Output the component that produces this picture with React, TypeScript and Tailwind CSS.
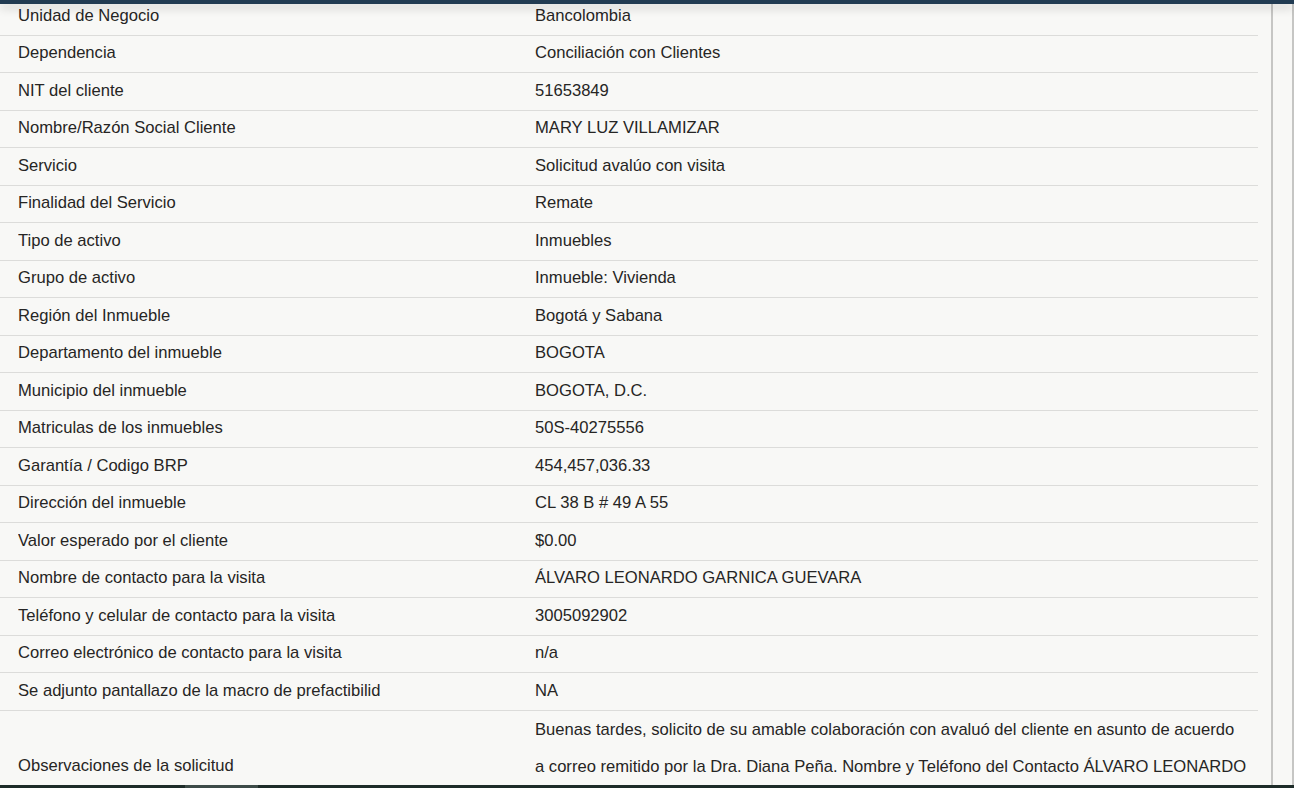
const rows: [string, string][] = [
  ["Unidad de Negocio", "Bancolombia"],
  ["Dependencia", "Conciliación con Clientes"],
  ["NIT del cliente", "51653849"],
  ["Nombre/Razón Social Cliente", "MARY LUZ VILLAMIZAR"],
  ["Servicio", "Solicitud avalúo con visita"],
  ["Finalidad del Servicio", "Remate"],
  ["Tipo de activo", "Inmuebles"],
  ["Grupo de activo", "Inmueble: Vivienda"],
  ["Región del Inmueble", "Bogotá y Sabana"],
  ["Departamento del inmueble", "BOGOTA"],
  ["Municipio del inmueble", "BOGOTA, D.C."],
  ["Matriculas de los inmuebles", "50S-40275556"],
  ["Garantía / Codigo BRP", "454,457,036.33"],
  ["Dirección del inmueble", "CL 38 B # 49 A 55"],
  ["Valor esperado por el cliente", "$0.00"],
  ["Nombre de contacto para la visita", "ÁLVARO LEONARDO GARNICA GUEVARA"],
  ["Teléfono y celular de contacto para la visita", "3005092902"],
  ["Correo electrónico de contacto para la visita", "n/a"],
  ["Se adjunto pantallazo de la macro de prefactibilid", "NA"],
];

export default function App() {
  return (
    <div
      className="relative flex h-screen flex-col overflow-hidden bg-[#f8f8f6] text-[16.6px] text-[#262524]"
      style={{ fontFamily: '"Liberation Sans", Arial, sans-serif' }}
    >
      {/* top nav edge + shadow */}
      <div className="absolute inset-x-0 top-0 z-10 h-[4px] bg-[#213b52] shadow-[0_4px_10px_rgba(0,0,0,0.2)]" />

      <div className="flex min-h-0 flex-1">
        <div className="-mt-[2px] w-[1258px] shrink-0">
          {rows.map(([label, value]) => (
            <div
              key={label}
              className="grid h-[37.5px] grid-cols-[517px_1fr] items-center border-b border-[#dcdcda] pl-[18px]"
            >
              <span className="truncate">{label}</span>
              <span>{value}</span>
            </div>
          ))}
          <div className="grid grid-cols-[517px_1fr] items-center pl-[18px]">
            <span>Observaciones de la solicitud</span>
            <p className="whitespace-nowrap leading-[37.5px]">
              Buenas tardes, solicito de su amable colaboración con avaluó del cliente en asunto de acuerdo
              <br />
              a correo remitido por la Dra. Diana Peña. Nombre y Teléfono del Contacto ÁLVARO LEONARDO
              <br />
              GARNICA GUEVARA 3005092902. Muchas gracias.
            </p>
          </div>
        </div>
        <div className="w-[13px] shrink-0" />
        <div className="w-[21px] shrink-0 border-l-2 border-[#c6c6c4]" />
        <div className="w-[2px] shrink-0 bg-[#c6c6c4]" />
      </div>

      {/* horizontal scrollbar */}
      <div className="flex h-[3px] shrink-0 bg-[#1e2c29]">
        <div className="ml-[185px] w-[73px] bg-[#3d4b48]" />
      </div>
    </div>
  );
}
